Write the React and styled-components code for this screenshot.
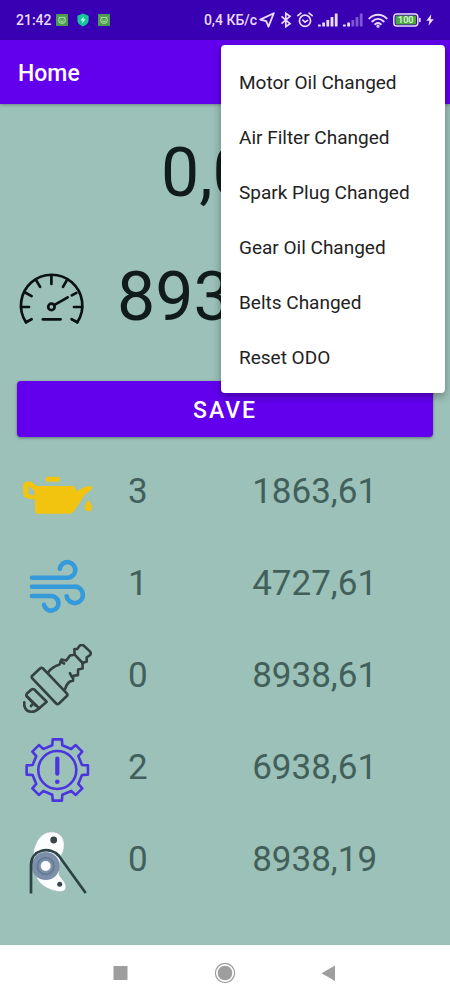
import React from "react";
import styled, { createGlobalStyle } from "styled-components";

const GlobalStyle = createGlobalStyle`
  * {
    box-sizing: border-box;
  }
  body {
    margin: 0;
    font-family: Roboto, "Liberation Sans", sans-serif;
    background: #9bc1b8;
  }
  button {
    font-family: inherit;
    border: 0;
    cursor: pointer;
  }
  svg {
    display: block;
  }
`;

const Screen = styled.div`
  position: relative;
  display: flex;
  flex-direction: column;
  min-height: 100vh;
`;

const StatusBar = styled.div`
  display: flex;
  align-items: center;
  justify-content: space-between;
  height: 40px;
  padding: 0 16px;
  background: #3900b3;
  color: #eadcff;
  font-size: 14px;
  font-weight: 500;
`;

const StatusGroup = styled.div`
  display: flex;
  align-items: center;
  gap: ${({ $gap }) => $gap}px;
`;

const AppBar = styled.header`
  display: flex;
  align-items: center;
  height: 64px;
  padding: 3px 18px 0;
  background: #6200ee;
  box-shadow: 0 1px 3px rgba(0, 0, 0, 0.3);
`;

const Title = styled.h1`
  margin: 0;
  color: #fff;
  font-size: 23px;
  line-height: 32px;
  font-weight: 500;
`;

const Main = styled.main`
  flex: 1;
  display: flex;
  flex-direction: column;
  gap: 44px;
  padding: 29px 17px 0;
`;

const Reading = styled.output`
  color: #111c1a;
  font-size: 68px;
  line-height: 80px;
  text-align: center;
`;

const Odometer = styled.div`
  display: flex;
  align-items: center;
  gap: 30px;
`;

const SaveButton = styled.button`
  width: 100%;
  height: 56px;
  padding: 3px 0 0;
  border-radius: 4px;
  background: #6200ee;
  box-shadow: 0 1px 3px rgba(0, 0, 0, 0.4);
  color: #fff;
  font-size: 23px;
  font-weight: 500;
  letter-spacing: 2px;
`;

const Parts = styled.ul`
  margin: 12px 0 0;
  padding: 0;
  list-style: none;
`;

const PartRow = styled.li`
  display: grid;
  grid-template-columns: 80px 34fr 66fr;
  column-gap: 31px;
  align-items: center;
  justify-items: start;
  height: 92px;
  svg {
    justify-self: center;
  }
`;

const PartValue = styled.span`
  padding-bottom: 6px;
  color: #42605a;
  font-size: 35px;
  line-height: 40px;
`;

const Menu = styled.div`
  position: absolute;
  top: 45px;
  right: 5px;
  display: flex;
  flex-direction: column;
  width: 224px;
  padding: 9px 0;
  border-radius: 4px;
  background: #fff;
  box-shadow: 0 3px 8px rgba(0, 0, 0, 0.35);
`;

const MenuItem = styled.button`
  height: 55px;
  padding: 2px 18px 0;
  background: none;
  color: #222;
  font-size: 19px;
  text-align: left;
  white-space: nowrap;
`;

const NavBar = styled.nav`
  display: flex;
  align-items: center;
  justify-content: center;
  gap: 80px;
  height: 55px;
  background: #fefffe;
`;

const NavButton = styled.button`
  width: 24px;
  height: 24px;
  padding: 0;
  background: none;
  color: #9e9e9e;
`;

const GreenApp = () => (
  <svg width="12" height="12" viewBox="0 0 12 12" fill="none" stroke="#bfe8b4" strokeWidth="0.9">
    <rect width="12" height="12" rx="0.8" fill="#4b9c50" stroke="none" />
    <rect x="2.8" y="3.4" width="6.4" height="5.8" rx="2.2" />
    <path d="M3.4 3.8 2.8 2.6M8.6 3.8l.6-1.2M4.3 6.1h1M6.7 6.1h1M4.6 7.7h2.8" />
  </svg>
);

const Shield = () => (
  <svg width="12" height="14" viewBox="0 0 12 14">
    <path d="M6 .6 11.6 2.8v4.4c0 2.8-2.2 4.9-5.6 6.2C2.6 12.1.4 10 .4 7.2V2.8z" fill="#17c59a" />
    <path d="M6.8 3.4 3.7 7.5h2l-.6 3 3.2-4.2H6.2z" fill="#e8fff8" />
  </svg>
);

const Plane = () => (
  <svg width="16" height="16" viewBox="0 0 16 16" fill="none" stroke="currentColor" strokeWidth="1.8" strokeLinejoin="round">
    <path d="M14.8 1.2 1.2 7.6l6 1.5 2.3 5.6z" />
  </svg>
);

const Bluetooth = () => (
  <svg width="12" height="16" viewBox="0 0 12 16" fill="none" stroke="currentColor" strokeWidth="1.7">
    <path d="m1.5 4.3 8.5 7.4-4.2 3V1.3l4.2 3-8.5 7.4" />
  </svg>
);

const Alarm = () => (
  <svg width="16" height="16" viewBox="0 0 16 16" fill="none" stroke="currentColor" strokeWidth="1.7" strokeLinecap="round">
    <circle cx="8" cy="8.8" r="5.6" />
    <path d="M.9 3.7 3.9 1.2M15.1 3.7l-3-2.5M5.8 8.2 8 10.2l2.6-1.8" />
  </svg>
);

const Signal = ({ bars }) => (
  <svg width="20" height="14" viewBox="0 0 20 14" fill="currentColor">
    {[2, 4, 6.5, 9.5, 13].map((height, i) => (
      <rect key={height} x={i * 4.2} y={13.5 - height} width="2.8" height={height} rx="0.5" opacity={i < bars ? 1 : 0.4} />
    ))}
  </svg>
);

const Wifi = () => (
  <svg width="20" height="15" viewBox="0 0 20 15" fill="none" stroke="currentColor" strokeWidth="2" strokeLinecap="round">
    <path d="M1.4 5.4c5-4.8 12.2-4.8 17.2 0M4.3 8.4c3.4-3.2 8-3.2 11.4 0M7.2 11.2c1.8-1.5 3.8-1.5 5.6 0" />
    <circle cx="10" cy="13.2" r="0.6" />
  </svg>
);

const Battery = () => (
  <svg width="28" height="14" viewBox="0 0 28 14">
    <rect x="0.8" y="0.9" width="24" height="12.2" rx="3" fill="none" stroke="currentColor" strokeWidth="1.5" />
    <rect x="2.5" y="2.6" width="20.6" height="8.8" rx="1.5" fill="#49a83f" />
    <rect x="26" y="4.8" width="1.7" height="4.4" rx="0.8" fill="currentColor" />
    <text x="12.8" y="10.3" fill="#e9f9e4" fontSize="9" fontWeight="500" textAnchor="middle">
      100
    </text>
  </svg>
);

const Bolt = () => (
  <svg width="8" height="12" viewBox="0 0 8 12" fill="currentColor">
    <path d="M5.3.3.3 6.8h3l-.8 5L7.8 5.2H4.7z" />
  </svg>
);

const Gauge = () => (
  <svg width="70" height="70" viewBox="0 0 70 70" fill="none" stroke="#0a1211" strokeWidth="2.7" strokeLinecap="round">
    <path d="M9 60.3A30.7 30.7 0 1 1 60.3 60.3" />
    <path d="M9 60.3 14.6 57.2M60.3 60.3 54.6 57.2M4.2 45H12M57 45h7.6M8.2 30.5l6.4 3.6M59.4 30.9l-4.6 2.5M19.4 18.6l3.7 6.3M49.6 18.6 46 24.9M34.4 14.5v7.5" />
    <path d="M37.5 42.8 50.7 35.3M25.8 57.3h17.8" />
    <circle cx="34.4" cy="44.9" r="3.2" />
  </svg>
);

const OilCan = () => (
  <svg width="70" height="70" viewBox="0 0 70 70" fill="#f2c40f">
    <rect x="23.5" y="16.7" width="14.5" height="5" rx="2.5" />
    <path
      fillRule="evenodd"
      d="M8 21.6c-4-.8-7.2 1.2-7.2 4.7l.7 8.2c.3 2.5 2 3.6 4.5 4l7 1v11.2c0 2 1 3 3 3h31.5c2 0 3.3-.8 4.5-2.4L63.5 34l5.4-3.8c1.8-1.6 1.6-4.4-.9-4.3-5.2.2-8.8 3-13.9 5.3-.2-3.4-1.5-5.2-4.3-5.2H15.5c-2 0-5-4-7.5-4.4zM6.6 25.9 12.4 30.8V35.6L6.6 34z"
    />
    <path d="M66.4 39.5c1.8 3.3 3.6 5.4 3.6 7.9a3.6 3.8 0 0 1-7.2 0c0-2.5 1.8-4.6 3.6-7.9z" />
  </svg>
);

const Air = () => (
  <svg width="70" height="70" viewBox="0 0 70 70" fill="none" stroke="#349adb" strokeWidth="4.6" strokeLinecap="round">
    <path d="M10 25.7H44.5A7.8 7.8 0 1 0 37.8 16.800" />
    <path d="M10 34.7H52A8.2 8.2 0 1 1 44.6 44.2" />
    <path d="M10 44H28.5A7.3 7.3 0 1 1 22 52.8" />
  </svg>
);

const SparkPlug = () => (
  <svg width="70" height="70" viewBox="0 0 70 70" fill="none" stroke="#35413f" strokeWidth="2.6" strokeLinejoin="round" strokeLinecap="round">
    <path d="M18 24.5 10.3 31.7q-1.2 1.3 0 2.7L34.2 59.5q1.4 1.3 2.8 0L44.8 52q1.3-1.3 0-2.7L21 24.5q-1.5-1.3-3 0z" />
    <path d="M26.3 28.3C29 24.5 33 22 37.5 20.6l2-5 4.8 1L48 11.5l4.7-.8-.4-5.4 3-.4 2.3-3.2q2.3-1.600 4-.2l6 5.600q1.900 2 .6 3.900l-3.600 2.500.2 4-4.300 1.500.2 5.500-4.600 1-.2 5.600-4.700.6-.2 4.900C46.500 37 44.600 40 43.200 44.800" />
    <path d="M52.7 10.7 60.6 19M38.5 17.5l3.6 2M49.8 32.8l-1.900-3.600" />
    <path d="M12 45.3q-1.400-.8-2.800.5l-4.500 4q-1 1.200 0 2.400l12.500 12 7.500-6.400z" />
    <path d="M2.3 58.3C1.5 63 4 67.6 9 67.8q4 .2 8.2-3.600M4.700 52.200l6.600 7.200-2.400 2.700M11.300 59.400l2.600 2.300" />
  </svg>
);

// outline with eight square teeth, repeated every 45 degrees
const toothCorners = [
  [25.2, -11.5],
  [31, -8.5],
  [31, 8.5],
  [25.2, 11.5],
];

const gearPath = [0, 45, 90, 135, 180, 225, 270, 315]
  .flatMap((tooth) =>
    toothCorners.map(([radius, offset]) => {
      const angle = ((tooth + offset) * Math.PI) / 180;
      return `${35.3 + radius * Math.cos(angle)} ${34 + radius * Math.sin(angle)}`;
    })
  )
  .join("L");

const Gear = () => (
  <svg width="70" height="70" viewBox="0 0 70 70" fill="none" stroke="#4b35e0" strokeWidth="2.6" strokeLinejoin="round">
    <path d={`M${gearPath}Z`} />
    <circle cx="35.3" cy="34" r="19" />
    <path d="M35.3 22.5v15.2" strokeWidth="4.2" strokeLinecap="round" />
    <circle cx="35.3" cy="45.7" r="2.3" fill="#4b35e0" stroke="none" />
  </svg>
);

const Belt = () => (
  <svg width="70" height="70" viewBox="0 0 70 70">
    <path
      d="M11 31C10.5 16 18.5 4 29.500 3.800 37.500 3.800 42.500 9.500 42.300 17c-.2 5-1.300 8.300-3.700 11.300L37 46.500c2.600 4.600 7 7.300 7 12.300 0 4.500-4 5.600-8.500 4.700C25.500 62 16 56 13.500 47z"
      fill="#fbfdff"
      stroke="#a5b4c0"
      strokeWidth="0.8"
    />
    <circle cx="23.7" cy="38" r="14" fill="#7c8fa9" />
    <circle cx="23.7" cy="38" r="8.3" fill="none" stroke="#647995" strokeWidth="1.8" />
    <circle cx="23.7" cy="38" r="5" fill="#fff" />
    <circle cx="31.7" cy="12" r="3.4" fill="#39444e" />
    <circle cx="37.7" cy="56.3" r="2.5" fill="#39444e" />
    <path d="M9 65.5V37C9 21.500 28 17.500 37 28L63.700 65" fill="none" stroke="#2c4346" strokeWidth="2.7" />
  </svg>
);

const parts = [
  { name: "Motor Oil", Icon: OilCan, changes: "3", mileage: "1863,61" },
  { name: "Air Filter", Icon: Air, changes: "1", mileage: "4727,61" },
  { name: "Spark Plug", Icon: SparkPlug, changes: "0", mileage: "8938,61" },
  { name: "Gear Oil", Icon: Gear, changes: "2", mileage: "6938,61" },
  { name: "Belts", Icon: Belt, changes: "0", mileage: "8938,19" },
];

const menuItems = [
  "Motor Oil Changed",
  "Air Filter Changed",
  "Spark Plug Changed",
  "Gear Oil Changed",
  "Belts Changed",
  "Reset ODO",
];

export default function App() {
  return (
    <Screen>
      <GlobalStyle />
      <StatusBar>
        <StatusGroup $gap={4}>
          <span>21:42</span>
          <StatusGroup $gap={9}>
            <GreenApp />
            <Shield />
            <GreenApp />
          </StatusGroup>
        </StatusGroup>
        <StatusGroup $gap={5}>
          <StatusGroup $gap={2}>
            <span>0,4 КБ/с</span>
            <Plane />
          </StatusGroup>
          <Bluetooth />
          <Alarm />
          <Signal bars={5} />
          <Signal bars={2} />
          <Wifi />
          <Battery />
          <Bolt />
        </StatusGroup>
      </StatusBar>
      <AppBar>
        <Title>Home</Title>
      </AppBar>
      <Main>
        <Reading>0,00</Reading>
        <Odometer>
          <Gauge />
          <Reading>8938,61</Reading>
        </Odometer>
        <div>
          <SaveButton type="button">SAVE</SaveButton>
          <Parts>
            {parts.map(({ name, Icon, changes, mileage }) => (
              <PartRow key={name}>
                <Icon />
                <PartValue>{changes}</PartValue>
                <PartValue>{mileage}</PartValue>
              </PartRow>
            ))}
          </Parts>
        </div>
      </Main>
      <NavBar>
        <NavButton type="button" aria-label="Recent apps">
          <svg width="24" height="24" viewBox="0 0 24 24" fill="currentColor">
            <rect x="4.5" y="5" width="14" height="14" />
          </svg>
        </NavButton>
        <NavButton type="button" aria-label="Home screen">
          <svg width="24" height="24" viewBox="0 0 24 24" fill="currentColor">
            <circle cx="12" cy="12" r="7.3" />
            <circle cx="12" cy="12" r="9.6" fill="none" stroke="currentColor" strokeWidth="1.2" />
          </svg>
        </NavButton>
        <NavButton type="button" aria-label="Back">
          <svg width="24" height="24" viewBox="0 0 24 24" fill="currentColor">
            <path d="M18 4.500v15.500L4.500 12.200z" />
          </svg>
        </NavButton>
      </NavBar>
      <Menu role="menu">
        {menuItems.map((item) => (
          <MenuItem key={item} type="button" role="menuitem">
            {item}
          </MenuItem>
        ))}
      </Menu>
    </Screen>
  );
}
